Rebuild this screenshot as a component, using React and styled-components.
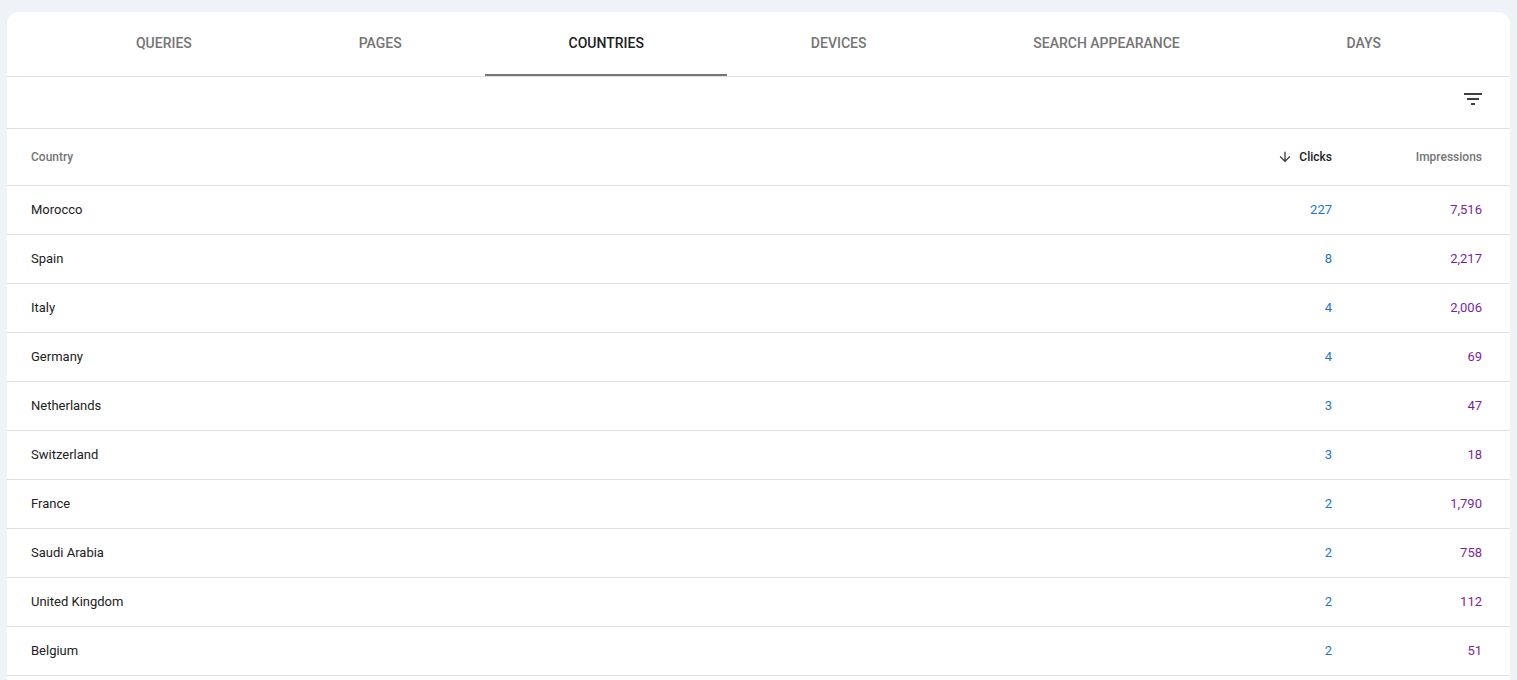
import React from "react";
import styled, { createGlobalStyle } from "styled-components";

const Global = createGlobalStyle`
  html, body { margin: 0; padding: 0; height: 100%; overflow: hidden; background: #eff3f8; }
  body { font-family: Roboto, "Liberation Sans", sans-serif; }
`;

const Page = styled.div`
  padding: 12px 7px 0;
`;

const Card = styled.main`
  background: #fff;
  border-radius: 12px 12px 0 0;
  min-height: calc(100vh - 12px);
`;

const Tabs = styled.nav`
  display: flex;
  height: 64px;
  padding: 0 45.5px;
  box-sizing: content-box;
  border-bottom: 1px solid #e0e0e0;
`;

const Tab = styled.div`
  flex: 1 0 auto;
  box-sizing: border-box;
  height: 64px;
  padding: 23px 24px 0;
  text-align: center;
  font-size: 14px;
  line-height: 16px;
  font-weight: 500;
  text-transform: uppercase;
  color: ${(p) => (p.$active ? "#212121" : "#757575")};
  border-bottom: 2px solid ${(p) => (p.$active ? "#757575" : "transparent")};
`;

const Toolbar = styled.div`
  display: flex;
  justify-content: flex-end;
  align-items: flex-start;
  height: 52px;
  padding: 10px 25px 0 0;
  box-sizing: border-box;
  border-bottom: 1px solid #e0e0e0;
`;

const FilterIcon = styled.svg`
  display: block;
  width: 24px;
  height: 24px;
  fill: #3c4043;
`;

const Row = styled.div`
  display: grid;
  grid-template-columns: 1fr 150px 150px;
  align-items: center;
  height: ${(p) => (p.$head ? "57px" : "49px")};
  box-sizing: border-box;
  padding: 0 28px ${(p) => (p.$head ? "0" : "2px")} 24px;
  border-bottom: 1px solid #e0e0e0;
  font-size: ${(p) => (p.$head ? "12px" : "13px")};
  font-weight: ${(p) => (p.$head ? 500 : 400)};
`;

const Name = styled.div`
  color: ${(p) => p.$color};
`;

const Num = styled.div`
  display: flex;
  justify-content: flex-end;
  align-items: center;
  gap: 6px;
  color: ${(p) => p.$color};
`;

const Arrow = styled.svg`
  display: block;
  width: 16px;
  height: 16px;
  fill: #3c4043;
`;

const tabs = ["Queries", "Pages", "Countries", "Devices", "Search appearance", "Days"];
const rows = [
  ["Morocco", "227", "7,516"],
  ["Spain", "8", "2,217"],
  ["Italy", "4", "2,006"],
  ["Germany", "4", "69"],
  ["Netherlands", "3", "47"],
  ["Switzerland", "3", "18"],
  ["France", "2", "1,790"],
  ["Saudi Arabia", "2", "758"],
  ["United Kingdom", "2", "112"],
  ["Belgium", "2", "51"],
];

export default function App() {
  return (
    <Page>
      <Global />
      <Card>
        <Tabs>
          {tabs.map((t) => (
            <Tab key={t} $active={t === "Countries"}>{t}</Tab>
          ))}
        </Tabs>
        <Toolbar>
          <FilterIcon viewBox="0 0 24 24">
            <path d="M10 18h4v-2h-4v2zM3 6v2h18V6H3zm3 7h12v-2H6v2z" />
          </FilterIcon>
        </Toolbar>
        <Row $head>
          <Name $color="#757575">Country</Name>
          <Num $color="#212121">
            <Arrow viewBox="0 0 24 24">
              <path d="M20 12l-1.41-1.41L13 16.17V4h-2v12.17l-5.58-5.59L4 12l8 8 8-8z" />
            </Arrow>
            Clicks
          </Num>
          <Num $color="#757575">Impressions</Num>
        </Row>
        {rows.map(([c, a, b]) => (
          <Row key={c}>
            <Name $color="#212121">{c}</Name>
            <Num $color="#1976d2">{a}</Num>
            <Num $color="#7b1fa2">{b}</Num>
          </Row>
        ))}
      </Card>
    </Page>
  );
}
